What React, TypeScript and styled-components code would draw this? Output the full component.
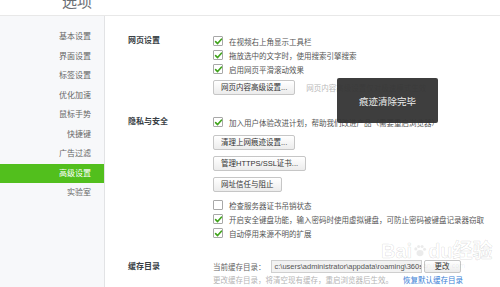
import React from "react";
import styled, { createGlobalStyle } from "styled-components";

const GlobalStyle = createGlobalStyle`
  html, body {
    margin: 0;
    width: 500px;
    height: 287px;
    overflow: hidden;
    background: #fff;
    font-family: "Liberation Sans", "Noto Sans CJK SC", sans-serif;
  }
`;

const menu = ["基本设置", "界面设置", "标签设置", "优化加速", "鼠标手势", "快捷键", "广告过滤", "高级设置", "实验室"];

function Check({ on }: { on?: boolean }) {
  return (
    <Box>
      {on && (
        <svg width="9" height="9" viewBox="0 0 9 9">
          <path d="M1.6 4.6 L3.6 6.6 L7.4 2.2" fill="none" stroke="#3fa31a" strokeWidth="1.6" strokeLinecap="round" strokeLinejoin="round" />
        </svg>
      )}
    </Box>
  );
}

function Option({ on, children }: { on?: boolean; children: React.ReactNode }) {
  return (
    <Row>
      <Check on={on} />
      <span>{children}</span>
    </Row>
  );
}

export default function App() {
  return (
    <>
      <GlobalStyle />
      <Page>
        <Header>
          <Title>选项</Title>
        </Header>
        <Body>
          <Sidebar>
            {menu.map((m) => (
              <SideItem key={m} $active={m === "高级设置"}>{m}</SideItem>
            ))}
          </Sidebar>
          <Main>
            <Section>
              <Label>网页设置</Label>
              <Options>
                <Option on>在视频右上角显示工具栏</Option>
                <Option on>拖放选中的文字时，使用搜索引擎搜索</Option>
                <Option on>启用网页平滑滚动效果</Option>
                <ButtonLine $mt={4}>
                  <Btn>网页内容高级设置...</Btn>
                  <Hint>网页内容高级设置仅对极速模式生效</Hint>
                </ButtonLine>
              </Options>
            </Section>

            <Section>
              <Label>隐私与安全</Label>
              <Options>
                <Option on>加入用户体验改进计划，帮助我们改进产品（需要重启浏览器）</Option>
                <ButtonLine $mt={6}><Btn>清理上网痕迹设置...</Btn></ButtonLine>
                <ButtonLine $mt={6}><Btn>管理HTTPS/SSL证书...</Btn></ButtonLine>
                <ButtonLine $mt={6}><Btn>网址信任与阻止</Btn></ButtonLine>
                <Spacer />
                <Option>检查服务器证书吊销状态</Option>
                <Option on>开启安全键盘功能，输入密码时使用虚拟键盘，可防止密码被键盘记录器窃取</Option>
                <Option on>自动停用来源不明的扩展</Option>
              </Options>
            </Section>

            <Section>
              <Label $h={13}>缓存目录</Label>
              <Options>
                <CacheRow>
                  <span>当前缓存目录：</span>
                  <PathInput>c:\users\administrator\appdata\roaming\360se6\User Data</PathInput>
                  <Btn $small>更改</Btn>
                </CacheRow>
                <Note>
                  更改缓存目录，将清空现有缓存，重启浏览器后生效。
                  <Link>恢复默认缓存目录</Link>
                </Note>
              </Options>
            </Section>

            <Toast>痕迹清除完毕</Toast>
            <Watermark>
              <Mark>Bai<Paw viewBox="0 0 20 20"><ellipse cx="10" cy="13" rx="5" ry="4.5" /><circle cx="4" cy="7" r="2.2" /><circle cx="8" cy="3.5" r="2.2" /><circle cx="13" cy="3.5" r="2.2" /><circle cx="16.5" cy="7.5" r="2.2" /></Paw>du经验</Mark>
              <Url>jingyan.baidu.com</Url>
            </Watermark>
          </Main>
        </Body>
      </Page>
    </>
  );
}

const Page = styled.div`
  width: 500px;
  height: 287px;
  display: flex;
  flex-direction: column;
  overflow: hidden;
`;

const Header = styled.div`
  height: 15px;
  border-bottom: 1px solid #e8e8e8;
  overflow: hidden;
`;

const Title = styled.div`
  margin-top: -6px;
  padding-left: 62px;
  font-size: 15px;
  line-height: 15px;
  color: #6a6e73;
`;

const Body = styled.div`
  flex: 1;
  display: flex;
  min-height: 0;
`;

const Sidebar = styled.div`
  width: 104px;
  flex-shrink: 0;
  padding-top: 11px;
  background: #f7f8fa;
  border-right: 1px solid #e2e3e5;
`;

const SideItem = styled.div<{ $active?: boolean }>`
  height: 19.5px;
  line-height: 19.5px;
  padding-right: 13px;
  text-align: right;
  font-size: 8px;
  color: ${(p) => (p.$active ? "#fff" : "#666")};
  background: ${(p) => (p.$active ? "#52bf1d" : "transparent")};
`;

const Main = styled.div`
  position: relative;
  flex: 1;
  padding: 18px 0 0 23px;
`;

const Section = styled.div`
  display: grid;
  grid-template-columns: 85px 1fr;
  margin-bottom: 20px;
`;

const Label = styled.div<{ $h?: number }>`
  font-size: 8px;
  font-weight: bold;
  color: #3a3f46;
  line-height: ${(p) => p.$h ?? 14}px;
`;

const Options = styled.div`
  display: flex;
  flex-direction: column;
`;

const Row = styled.div`
  display: flex;
  align-items: center;
  gap: 6px;
  height: 14px;
  font-size: 7.5px;
  color: #555;
  white-space: nowrap;
`;

const Box = styled.div`
  width: 8px;
  height: 8px;
  flex-shrink: 0;
  border: 1px solid #a8a8a8;
  border-radius: 1px;
  background: #fff;
  display: flex;
  align-items: center;
  justify-content: center;
  & svg {
    margin: -1px;
  }
`;

const ButtonLine = styled.div<{ $mt: number }>`
  display: flex;
  align-items: center;
  gap: 11px;
  margin-top: ${(p) => p.$mt}px;
`;

const Spacer = styled.div`
  height: 6px;
`;

const Btn = styled.div<{ $small?: boolean }>`
  height: ${(p) => (p.$small ? 11 : 13)}px;
  line-height: ${(p) => (p.$small ? 11 : 13)}px;
  padding: 0 ${(p) => (p.$small ? 10 : 7)}px;
  border: 1px solid #c6c6c6;
  border-radius: 2px;
  background: linear-gradient(#ffffff, #ececec);
  font-size: 7.5px;
  color: #333;
  white-space: nowrap;
  flex-shrink: 0;
`;

const Hint = styled.span`
  font-size: 7.5px;
  color: #b9b9b9;
  white-space: nowrap;
`;

const CacheRow = styled.div`
  display: flex;
  align-items: center;
  height: 13px;
  font-size: 7.5px;
  color: #666;
  white-space: nowrap;
`;

const PathInput = styled.div`
  width: 143px;
  height: 11px;
  line-height: 11px;
  margin: 0 2px 0 5px;
  padding: 0 3px;
  border: 1px solid #cfcfcf;
  background: #f2f2f2;
  color: #555;
  font-size: 7.5px;
  overflow: hidden;
`;

const Note = styled.div`
  margin-top: 3px;
  font-size: 7.5px;
  line-height: 10px;
  color: #b5b5b5;
  white-space: nowrap;
`;

const Link = styled.span`
  margin-left: 10px;
  color: #3a7fd6;
`;

const Toast = styled.div`
  position: absolute;
  left: 232px;
  top: 62px;
  width: 101px;
  height: 45px;
  border-radius: 2px;
  background: rgba(52, 52, 52, 0.95);
  color: #ececec;
  font-size: 9.5px;
  display: flex;
  align-items: center;
  justify-content: center;
`;

const Watermark = styled.div`
  position: absolute;
  left: 276px;
  top: 224px;
  display: flex;
  flex-direction: column;
  align-items: center;
  pointer-events: none;
`;

const Mark = styled.div`
  display: flex;
  align-items: center;
  font-size: 20px;
  font-weight: bold;
  line-height: 22px;
  color: rgba(255, 255, 255, 0.5);
  -webkit-text-stroke: 0.7px rgba(0, 0, 0, 0.12);
`;

const Paw = styled.svg`
  width: 14px;
  height: 14px;
  margin: 0 1px;
  fill: rgba(0, 0, 0, 0.08);
`;

const Url = styled.div`
  font-size: 7px;
  color: rgba(0, 0, 0, 0.07);
`;
